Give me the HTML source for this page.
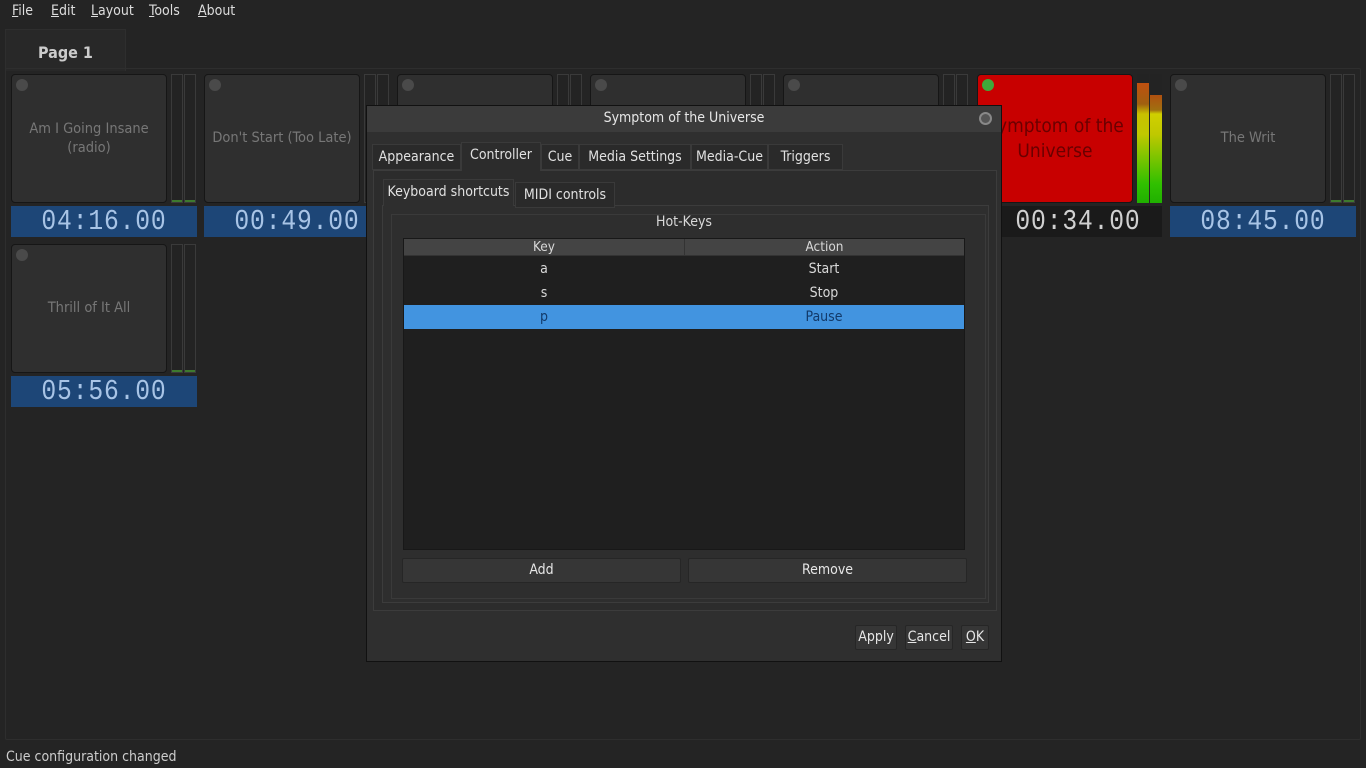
<!DOCTYPE html>
<html><head><meta charset="utf-8"><style>
*{box-sizing:border-box;margin:0;padding:0}
body{width:1366px;height:768px;background:#242424;font-family:"DejaVu Sans Condensed","Liberation Sans",sans-serif;font-size:13px;color:#d8d8d8;position:relative;overflow:hidden}
.a{position:absolute}
.menu span{position:absolute;top:3px;font-size:14px;color:#ddd}
.cue{position:absolute;width:156px;height:129px;background:#2f2f2f;border:1px solid #161616;border-radius:4px;display:flex;align-items:center;justify-content:center;text-align:center;color:#777;font-size:14.5px;line-height:19px}
.cue i{position:absolute;left:4px;top:4px;width:12px;height:12px;border-radius:50%;background:#4a4a4a}
.meter{position:absolute;width:12px;height:129px;border:1px solid #3a3a3a;background:#232323}
.meter b{position:absolute;left:0;right:0;bottom:0;height:2px;background:#3e7a2e}
.tm{position:absolute;width:186px;height:31px;background:#1d4677;color:#a8c4e6;font-family:"Liberation Mono",monospace;font-size:29px;line-height:31px;text-align:center;letter-spacing:1px;transform:scaleX(0.85)}
.tmw{position:absolute;width:186px;height:31px;background:#1d4677}
.dlg{position:absolute;left:366px;top:105px;width:636px;height:557px;background:#2f2f2f;border:1px solid #111}
.tab{position:absolute;top:38px;height:26px;background:#2a2a2a;border:1px solid #3a3a3a;font-size:14px;line-height:24px;text-align:center;color:#e0e0e0;white-space:nowrap}
.btn{position:absolute;height:25px;background:#363636;border:1px solid #262626;border-radius:2px;text-align:center;line-height:23px;font-size:14px;color:#e6e6e6}
.row{position:absolute;left:0;width:560px;height:24px;line-height:24px;font-size:14px}
.row span{position:absolute;text-align:center}
</style></head><body>
<div class="menu"><span style="left:12px"><u>F</u>ile</span><span style="left:51px"><u>E</u>dit</span><span style="left:91px"><u>L</u>ayout</span><span style="left:149px"><u>T</u>ools</span><span style="left:198px"><u>A</u>bout</span></div>
<div class="a" style="left:5px;top:29px;width:121px;height:42px;background:#282828;border:1px solid #2e2e2e;border-bottom:none"></div>
<div class="a" style="left:38px;top:43px;font-weight:bold;font-size:16px;color:#ccc">Page 1</div>
<div class="a" style="left:5px;top:68px;width:1356px;height:672px;border:1px solid #2e2e2e;border-radius:2px"></div>

<div class="cue" style="left:11px;top:74px"><i></i>Am I Going Insane<br>(radio)</div>
<div class="meter" style="left:171px;top:74px"><b></b></div><div class="meter" style="left:184px;top:74px"><b></b></div>
<div class="tmw" style="left:11px;top:206px"></div><div class="tm" style="left:11px;top:206px;background:none">04:16.00</div>

<div class="cue" style="left:204px;top:74px"><i></i>Don't Start (Too Late)</div>
<div class="meter" style="left:364px;top:74px"></div><div class="meter" style="left:377px;top:74px"></div>
<div class="tmw" style="left:204px;top:206px"></div><div class="tm" style="left:204px;top:206px;background:none">00:49.00</div>

<div class="cue" style="left:397px;top:74px"><i></i></div>
<div class="meter" style="left:557px;top:74px"></div><div class="meter" style="left:570px;top:74px"></div>
<div class="cue" style="left:590px;top:74px"><i></i></div>
<div class="meter" style="left:750px;top:74px"></div><div class="meter" style="left:763px;top:74px"></div>
<div class="cue" style="left:783px;top:74px"><i></i></div>
<div class="meter" style="left:943px;top:74px"></div><div class="meter" style="left:956px;top:74px"></div>

<div class="cue" style="left:977px;top:74px;background:#c80000;color:#6a0000;font-size:19px;line-height:25px"><i style="background:#3fa83a"></i>Symptom of the<br>Universe</div>
<div class="a" style="left:1137px;top:74px;width:12px;height:129px;background:linear-gradient(#232323 0,#232323 9px,#c05010 9px,#a06010 30px,#c8c000 40px,#c0c800 60px,#30c000 110px,#20b000)"></div>
<div class="a" style="left:1150px;top:74px;width:12px;height:129px;background:linear-gradient(#232323 0,#232323 21px,#b05010 21px,#a07010 36px,#d0d000 40px,#c0c800 60px,#30c000 110px,#20b000)"></div>
<div class="a" style="left:1002px;top:206px;width:160px;height:31px;background:#1a1a1a"></div>
<div class="tm" style="left:985px;top:206px;background:none;color:#d0d0d0">00:34.00</div>

<div class="cue" style="left:1170px;top:74px"><i></i>The Writ</div>
<div class="meter" style="left:1330px;top:74px"><b></b></div><div class="meter" style="left:1343px;top:74px"><b></b></div>
<div class="tmw" style="left:1170px;top:206px"></div><div class="tm" style="left:1170px;top:206px;background:none">08:45.00</div>

<div class="cue" style="left:11px;top:244px"><i></i>Thrill of It All</div>
<div class="meter" style="left:171px;top:244px"><b></b></div><div class="meter" style="left:184px;top:244px"><b></b></div>
<div class="tmw" style="left:11px;top:376px"></div><div class="tm" style="left:11px;top:376px;background:none">05:56.00</div>

<div class="a" style="left:6px;top:749px;font-size:14px;color:#ccc">Cue configuration changed</div>

<div class="dlg">
 <div class="a" style="left:0;top:0;width:634px;height:26px;background:#3b3b3b;text-align:center;line-height:25px;font-size:14px;color:#e6e6e6">Symptom of the Universe</div>
 <div class="a" style="left:612px;top:6px;width:13px;height:13px;border-radius:50%;background:#555;border:2px solid #888"></div>
 <div class="a" style="left:6px;top:64px;width:624px;height:441px;border:1px solid #3c3c3c;background:#2c2c2c"></div>
 <div class="tab" style="left:5px;width:89px">Appearance</div>
 <div class="tab" style="left:94px;top:36px;height:29px;width:80px;background:#2c2c2c;border-bottom:none">Controller</div>
 <div class="tab" style="left:174px;width:38px">Cue</div>
 <div class="tab" style="left:212px;width:112px">Media Settings</div>
 <div class="tab" style="left:324px;width:77px">Media-Cue</div>
 <div class="tab" style="left:401px;width:75px">Triggers</div>
 <div class="a" style="left:15px;top:99px;width:607px;height:398px;border:1px solid #3c3c3c;background:#2e2e2e"></div>
 <div class="tab" style="left:16px;top:73px;height:27px;width:131px;background:#2e2e2e;border-bottom:none">Keyboard shortcuts</div>
 <div class="tab" style="left:148px;top:76px;width:100px">MIDI controls</div>
 <div class="a" style="left:24px;top:108px;width:595px;height:385px;border:1px solid #3a3a3a"></div>
 <div class="a" style="left:0;width:634px;top:108px;text-align:center;font-size:14px">Hot-Keys</div>
 <div class="a" style="left:36px;top:132px;width:562px;height:312px;background:#1f1f1f;border:1px solid #181818">
  <div class="a" style="left:0;top:0;width:560px;height:17px;background:#444;border-bottom:1px solid #333;font-size:13.5px;line-height:16px">
   <span class="a" style="left:0;width:280px;text-align:center">Key</span><span class="a" style="left:280px;width:280px;text-align:center;border-left:1px solid #333">Action</span></div>
  <div class="row" style="top:18px"><span style="left:0;width:280px">a</span><span style="left:280px;width:280px">Start</span></div>
  <div class="row" style="top:42px"><span style="left:0;width:280px">s</span><span style="left:280px;width:280px">Stop</span></div>
  <div class="row" style="top:66px;background:#4294e0;color:#123a6a"><span style="left:0;width:280px">p</span><span style="left:280px;width:280px">Pause</span></div>
 </div>
 <div class="btn" style="left:35px;top:452px;width:279px">Add</div>
 <div class="btn" style="left:321px;top:452px;width:279px">Remove</div>
 <div class="btn" style="left:488px;top:519px;width:42px">Apply</div>
 <div class="btn" style="left:538px;top:519px;width:48px"><u>C</u>ancel</div>
 <div class="btn" style="left:594px;top:519px;width:28px"><u>O</u>K</div>
</div>
</body></html>
